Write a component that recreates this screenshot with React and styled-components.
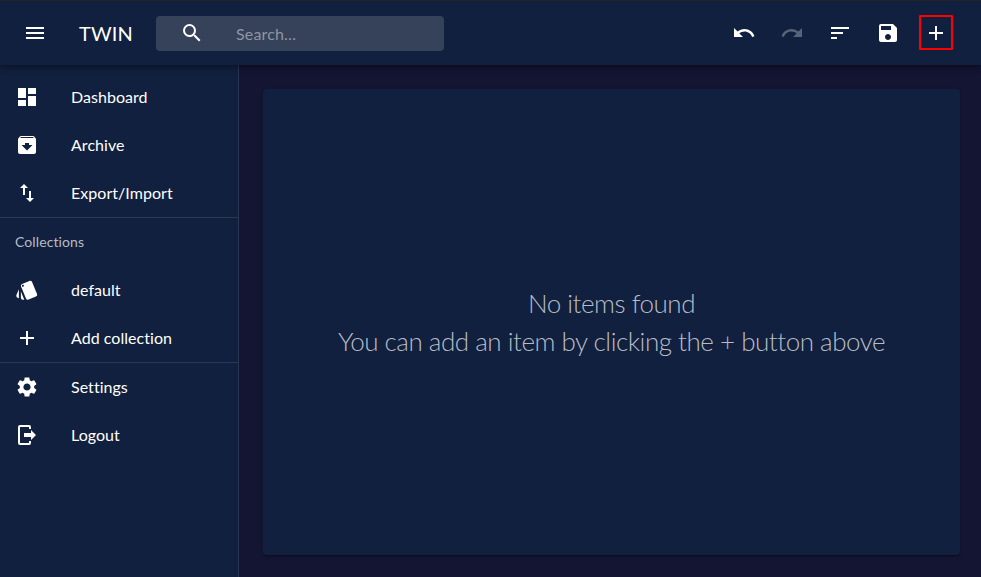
import React from 'react';
import styled, { createGlobalStyle } from 'styled-components';
import {
  MdMenu, MdSearch, MdUndo, MdRedo, MdSort, MdSave, MdAdd,
  MdDashboard, MdArchive, MdImportExport, MdStyle, MdSettings,
} from 'react-icons/md';

const GlobalStyle = createGlobalStyle`
  *, *::before, *::after { box-sizing: border-box; }
  body { margin: 0; background: #141533; color: #fff; font-family: Lato, sans-serif; }
  button { font: inherit; color: inherit; background: none; border: 0; padding: 0; }
  svg { display: block; }
`;

const Page = styled.div`
  display: flex;
  flex-direction: column;
  height: 100vh;
  overflow: hidden;
`;

const AppBar = styled.header`
  position: relative;
  z-index: 1;
  flex: none;
  display: flex;
  align-items: center;
  height: 65px;
  padding: 0 21px 0 11px;
  background: #11203e;
  border-top: 1px solid #222222;
  box-shadow: 0 2px 4px -1px rgba(0, 0, 0, 0.2), 0 4px 5px rgba(0, 0, 0, 0.14),
    0 1px 10px rgba(0, 0, 0, 0.12);
`;

const IconButton = styled.button`
  display: flex;
  align-items: center;
  justify-content: center;
  width: 48px;
  height: 48px;
  font-size: 24px;
  opacity: ${(p) => (p.disabled ? 0.3 : 1)};
`;

const Highlight = styled.span`
  display: flex;
  align-items: center;
  justify-content: center;
  flex: none;
  width: 34px;
  height: 35px;
  margin-bottom: 1px;
  padding-top: 1px;
  border: 2px solid #ff0000;
  border-radius: 1px;
`;

const Title = styled.h1`
  margin: 0 0 0 20px;
  width: 77px;
  font-size: 20px;
  font-weight: 400;
  line-height: 32px;
  letter-spacing: 0.1px;
`;

const SearchBox = styled.label`
  display: flex;
  align-items: center;
  width: 288px;
  height: 35px;
  margin-top: 1px;
  border-radius: 4px;
  background: #364259;
`;

const SearchIcon = styled.span`
  width: 72px;
  height: 25px;
  display: flex;
  justify-content: center;
  font-size: 24px;
`;

const SearchInput = styled.input`
  flex: 1;
  min-width: 0;
  height: 35px;
  border: 0;
  padding: 1px 8px;
  background: none;
  color: #fff;
  font: 400 16px Lato, sans-serif;
  letter-spacing: 0.15px;
  &::placeholder { color: #8d95a2; opacity: 1; }
`;

const Actions = styled.div`
  display: flex;
  margin-left: auto;
`;

const Body = styled.div`
  flex: 1;
  display: flex;
  min-height: 0;
`;

const Sidebar = styled.nav`
  flex: none;
  width: 239px;
  padding-top: 8px;
  background: #11203e;
  border-right: 1px solid #2b3753;
`;

const NavGroup = styled.div`
  border-bottom: ${(p) => (p.$last ? '0' : '1px solid #2b3753')};
`;

const NavItem = styled.a`
  display: flex;
  align-items: center;
  height: 48px;
  padding-left: 15px;
  font-size: 16px;
  line-height: 24px;
  letter-spacing: 0.04px;
`;

const NavIcon = styled.span`
  width: 56px;
  font-size: 24px;
`;

const Subheader = styled.div`
  height: 48px;
  padding-left: 15px;
  font-size: 14px;
  line-height: 48px;
  letter-spacing: 0.1px;
  color: #b8bcc5;
`;

const Main = styled.main`
  flex: 1;
  display: flex;
  padding: 24px 21px 22px 24px;
`;

const EmptyCard = styled.section`
  flex: 1;
  display: flex;
  flex-direction: column;
  align-items: center;
  justify-content: center;
  border-radius: 4px;
  background: #11203e;
  box-shadow: 0 2px 1px -1px rgba(0, 0, 0, 0.2), 0 1px 1px rgba(0, 0, 0, 0.14),
    0 1px 3px rgba(0, 0, 0, 0.12);
`;

const Message = styled.p`
  margin: 0;
  font-size: 26px;
  font-weight: 300;
  line-height: 38px;
  letter-spacing: -0.48px;
  color: #b8bcc5;
  white-space: nowrap;
`;

const LogoutIcon = () => (
  <svg width="24" height="24" viewBox="0 0 24 24" fill="currentColor">
    <path d="M16,17V14H9V10H16V7L21,12L16,17M14,2A2,2 0 0,1 16,4V6H14V4H5V20H14V18H16V20A2,2 0 0,1 14,22H5A2,2 0 0,1 3,20V4A2,2 0 0,1 5,2H14Z" />
  </svg>
);

const NavLink = ({ icon: Icon, children }) => (
  <NavItem>
    <NavIcon><Icon /></NavIcon>
    {children}
  </NavItem>
);

export default function App() {
  return (
    <Page>
      <GlobalStyle />
      <AppBar>
        <IconButton aria-label="Menu"><MdMenu /></IconButton>
        <Title>TWIN</Title>
        <SearchBox>
          <SearchIcon><MdSearch /></SearchIcon>
          <SearchInput placeholder="Search…" />
        </SearchBox>
        <Actions>
          <IconButton aria-label="Undo"><MdUndo /></IconButton>
          <IconButton aria-label="Redo" disabled><MdRedo /></IconButton>
          <IconButton aria-label="Sort"><MdSort /></IconButton>
          <IconButton aria-label="Save"><MdSave /></IconButton>
          <IconButton aria-label="Add item"><Highlight><MdAdd /></Highlight></IconButton>
        </Actions>
      </AppBar>
      <Body>
        <Sidebar>
          <NavGroup>
            <NavLink icon={MdDashboard}>Dashboard</NavLink>
            <NavLink icon={MdArchive}>Archive</NavLink>
            <NavLink icon={MdImportExport}>Export/Import</NavLink>
          </NavGroup>
          <NavGroup>
            <Subheader>Collections</Subheader>
            <NavLink icon={MdStyle}>default</NavLink>
            <NavLink icon={MdAdd}>Add collection</NavLink>
          </NavGroup>
          <NavGroup $last>
            <NavLink icon={MdSettings}>Settings</NavLink>
            <NavLink icon={LogoutIcon}>Logout</NavLink>
          </NavGroup>
        </Sidebar>
        <Main>
          <EmptyCard>
            <Message>No items found</Message>
            <Message>You can add an item by clicking the + button above</Message>
          </EmptyCard>
        </Main>
      </Body>
    </Page>
  );
}
